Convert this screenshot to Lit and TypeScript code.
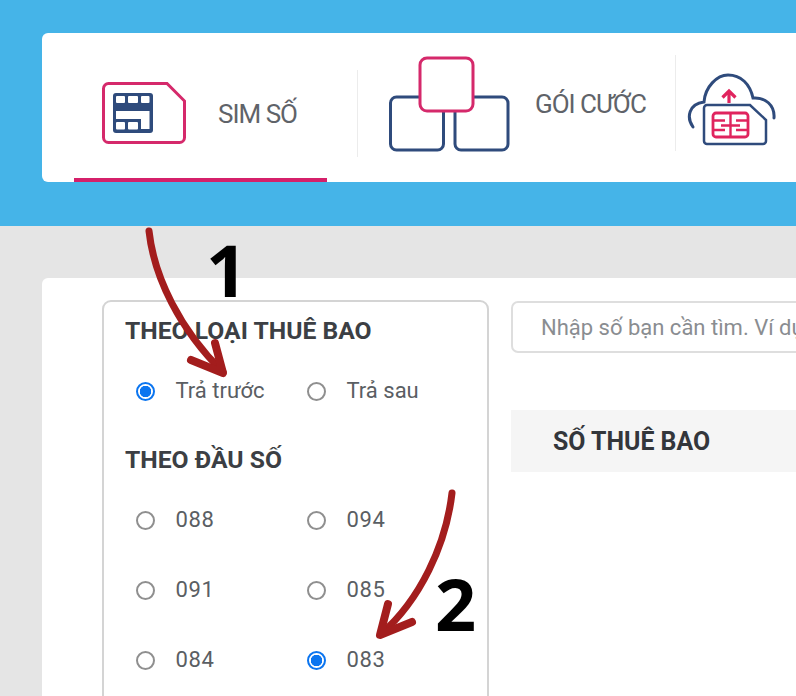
import { LitElement, html, css, svg } from "lit";
import { customElement } from "lit/decorators.js";

const radio = (label: string, checked = false, digits = false) => html`
  <div class="opt">
    <span class="radio ${checked ? "on" : ""}"></span>
    <span class="opt-label ${digits ? "digits" : ""}">${label}</span>
  </div>`;

const simIcon = html`<svg class="ic-sim" width="86" height="64" viewBox="0 0 86 64" fill="none">
  <path d="M6.500 2.500H65L82.500 20V56.500a5 5 0 0 1-5 5H6.500a5 5 0 0 1-5-5V7.500a5 5 0 0 1 5-5Z" stroke="#d5296b" stroke-width="3"/>
  <rect x="11" y="12" width="40" height="40" rx="3" fill="#2f4b7c"/>
  <g fill="#fff">
    <rect x="14" y="15" width="9" height="7" rx="1"/><rect x="26" y="15" width="10" height="7" rx="1"/><rect x="39" y="15" width="8.500" height="7" rx="1"/>
    <path d="M14 30H47.500V48H39V38H14Z"/>
    <rect x="14" y="41" width="9" height="7.500" rx="1"/><rect x="26" y="41" width="10" height="7.500" rx="1"/>
  </g>
</svg>`;

const boxIcon = html`<svg class="ic-box" width="122" height="97" viewBox="0 0 122 97" fill="none">
  <rect x="1.500" y="41" width="53" height="53" rx="6" stroke="#2f4b7c" stroke-width="3"/>
  <rect x="66" y="41" width="53" height="53" rx="6" stroke="#2f4b7c" stroke-width="3"/>
  <rect x="31" y="2" width="53" height="53" rx="7" fill="#fff" stroke="#d5296b" stroke-width="3"/>
</svg>`;

const cloudIcon = html`<svg class="ic-cloud" width="90" height="74" viewBox="0 0 90 74" fill="none">
  <path d="M6 54C-1 44 2 31 17 29C18 14 30 2 41 2C54 2 63 11 66 25C78 24 88 32 87 45" stroke="#2f4b7c" stroke-width="3" stroke-linecap="round"/>
  <path d="M17 35a3 3 0 0 1 3-3H63L79 47V68a3 3 0 0 1-3 3H20a3 3 0 0 1-3-3Z" fill="#fff" stroke="#2f4b7c" stroke-width="2.500"/>
  <path d="M42 30V18M35.500 24.500L42 18l6.500 6.500" stroke="#e0245e" stroke-width="3.200"/>
  <rect x="26" y="40" width="35" height="24" rx="3" stroke="#e0245e" stroke-width="2.800"/>
  <path d="M43.500 40V64M26 47.500H38M26 57H38M34 52.500H53M61 47.500H49M61 57H49" stroke="#e0245e" stroke-width="2.400"/>
</svg>`;

const arrows = svg`
  <path d="M149 231C154 277 180 330 223 372" stroke="#a31d1d" stroke-width="7" stroke-linecap="round"/>
  <path d="M191 360L223 373L215 343" stroke="#a31d1d" stroke-width="8" stroke-linecap="round" stroke-linejoin="round"/>
  <path d="M452 493C446 545 420 600 381 634" stroke="#a31d1d" stroke-width="7" stroke-linecap="round"/>
  <path d="M388 604L380 635L412 622" stroke="#a31d1d" stroke-width="8" stroke-linecap="round" stroke-linejoin="round"/>
`;

@customElement("app-root")
export class AppRoot extends LitElement {
  static styles = css`
    :host { display: block; position: relative; width: 796px; height: 696px; overflow: hidden;
      background: #e5e5e5; font-family: Roboto, "Liberation Sans", sans-serif; }
    .hero { background: #45b4e8; height: 226px; padding: 33px 0 0 42px; box-sizing: border-box; }
    .tabs { width: 1000px; height: 149px; background: #fff; border-radius: 6px; display: flex; padding-left: 32px; box-sizing: border-box; }
    .tab { display: flex; color: #5f6369; font-size: 26px; }
    .tab1 { width: 253px; height: 149px; box-sizing: border-box; border-bottom: 4px solid #d5206a; padding: 48px 0 0 28px; gap: 30px; align-items: flex-start; }
    .tab1 span { line-height: 28px; margin-top: 19px; letter-spacing: -1px; }
    .sep { width: 1px; background: #ececec; }
    .sep1 { height: 87px; margin: 37px 31px 0 30px; }
    .tab2 { width: 286px; padding-top: 23px; align-items: flex-start; gap: 24px; }
    .tab2 span { line-height: 28px; margin-top: 34px; letter-spacing: -1px; }
    .sep2 { height: 96px; margin: 22px 11px 0 0; }
    .tab3 { padding-top: 40px; }
    .body { margin-top: 52px; margin-left: 42px; width: 1000px; height: 500px; background: #fff; border-radius: 6px; display: flex; gap: 22px; padding: 22px 0 0 60px; box-sizing: border-box; }
    .filter { width: 387px; height: 500px; box-sizing: border-box; border: 2px solid #d4d4d4; border-radius: 9px; padding: 14px 0 0 21px; flex: none; }
    h3 { margin: 0; font-size: 24.700px; line-height: 30px; font-weight: 700; color: #3c3f44; }
    .grid { display: grid; grid-template-columns: 171px 171px; grid-auto-rows: 70px; align-items: center; }
    .grid.one { margin: 10px 0 19px; }
    .grid.two { margin-top: 10px; }
    .opt { display: flex; align-items: center; padding-left: 11px; }
    .radio { width: 19px; height: 19px; box-sizing: border-box; border: 2px solid #8f8f8f; border-radius: 50%; background: #fff; margin-right: 20.500px; flex: none; }
    .radio.on { border-color: #0b75f0; background: radial-gradient(circle, #0b75f0 0 5.500px, #fff 6px); }
    .opt-label { font-size: 22px; line-height: 28px; color: #5a5e63; }
    .opt-label.digits { letter-spacing: 0.6px; }
    .main { flex: none; width: 500px; margin-top: 1px; }
    .search { height: 52px; box-sizing: border-box; border: 2px solid #dedede; border-radius: 7px; padding-left: 28px; display: flex; align-items: center; font-size: 22px; color: #8a8d91; white-space: nowrap; }
    .thead { margin-top: 57px; height: 62px; background: #f5f5f5; display: flex; align-items: center; padding-left: 42px; font-size: 24.900px; font-weight: 700; color: #33363b; }
    .overlay { position: absolute; inset: 0; width: 796px; height: 696px; fill: none; pointer-events: none; }
    .num { position: absolute; font-family: "Open Sans", sans-serif; font-weight: 700; font-size: 72px; line-height: 72px; color: #000; }
    .n1 { left: 206px; top: 233px; }
    .n2 { left: 435px; top: 567px; }
    svg { display: block; flex: none; overflow: visible; }
  `;

  render() {
    return html`
      <div class="hero">
        <div class="tabs">
          <div class="tab tab1">${simIcon}<span>SIM SỐ</span></div>
          <div class="sep sep1"></div>
          <div class="tab tab2">${boxIcon}<span>GÓI CƯỚC</span></div>
          <div class="sep sep2"></div>
          <div class="tab tab3">${cloudIcon}</div>
        </div>
      </div>
      <div class="body">
        <div class="filter">
          <h3>THEO LOẠI THUÊ BAO</h3>
          <div class="grid one">${radio("Trả trước", true)}${radio("Trả sau")}</div>
          <h3>THEO ĐẦU SỐ</h3>
          <div class="grid two">
            ${radio("088", false, true)}${radio("094", false, true)}${radio("091", false, true)}${radio("085", false, true)}${radio("084", false, true)}${radio("083", true, true)}
          </div>
        </div>
        <div class="main">
          <div class="search">Nhập số bạn cần tìm. Ví dụ</div>
          <div class="thead">SỐ THUÊ BAO</div>
        </div>
      </div>
      <svg class="overlay" viewBox="0 0 796 696">${arrows}</svg>
      <div class="num n1">1</div>
      <div class="num n2">2</div>
    `;
  }
}
